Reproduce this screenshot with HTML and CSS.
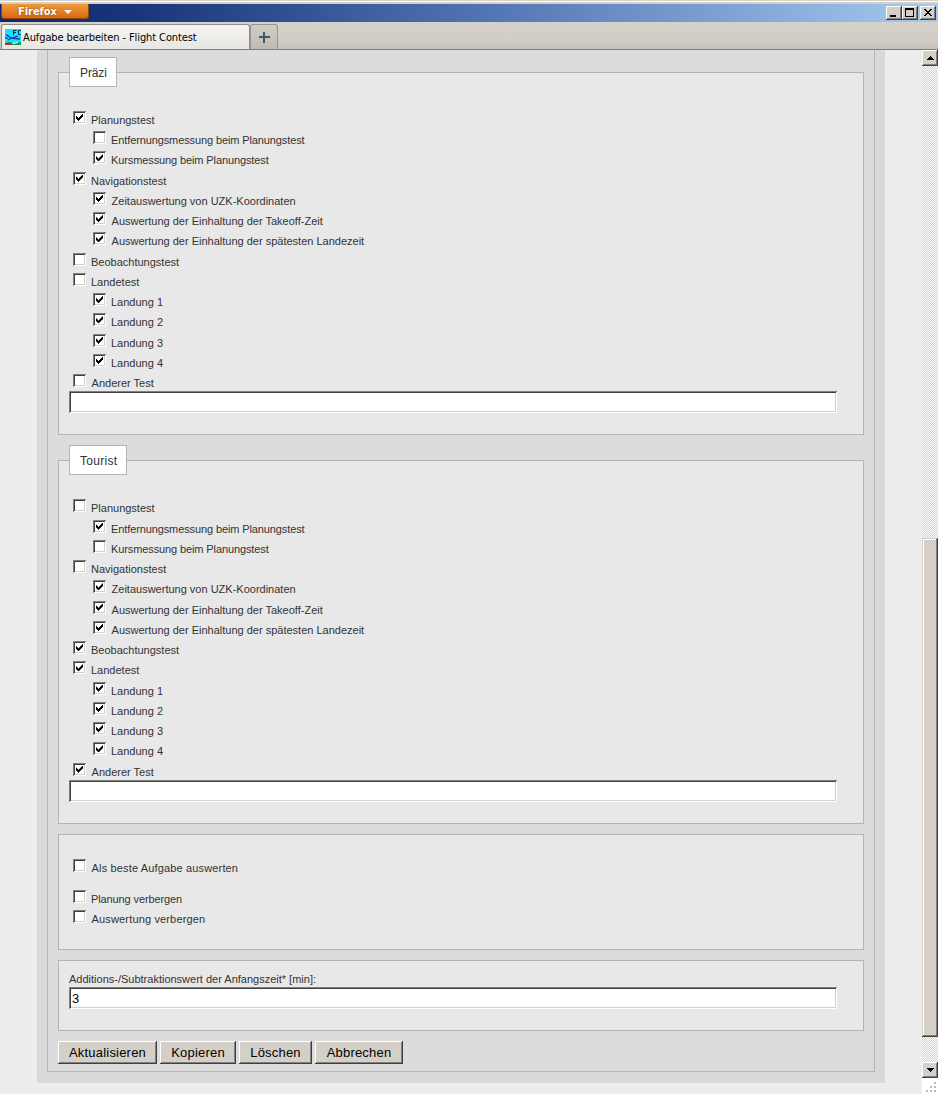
FILE: index.html
```
<!DOCTYPE html>
<html lang="de">
<head>
<meta charset="utf-8">
<title>Aufgabe bearbeiten - Flight Contest</title>
<link rel="stylesheet" href="styles.css">
</head>
<body>
<header class="titlebar">
  <button class="app-menu">Firefox <i class="caret"></i></button>
  <div class="window-buttons">
    <button class="win" aria-label="Minimieren"><svg width="16" height="14" shape-rendering="crispEdges"><path d="M4 9h6v2H4z"/></svg></button>
    <button class="win" aria-label="Maximieren"><svg width="16" height="14" shape-rendering="crispEdges"><path fill-rule="evenodd" d="M3 2h9v9H3zM4 4v6h7V4z"/></svg></button>
    <button class="win close" aria-label="Schließen"><svg width="16" height="14" shape-rendering="crispEdges"><path d="M4 3h2v1h1v1h2V4h1V3h2v1h-1v1h-1v1H9v1h1v1h1v1h1v1h-2V9H9V8H7v1H6v1H4V9h1V8h1V7h1V6H6V5H5V4H4z"/></svg></button>
  </div>
</header>
<nav class="tabs">
  <div class="tab">
    <svg class="favicon" width="16" height="16" viewBox="0 0 16 16"><path fill="#14e4f4" d="M0 0h16v16H0z"/><path fill="#16934f" d="M0 14l4-1 5 1 7-1v3H0z"/><path fill="#b52d2b" d="M0 15l3-1 4 1v1H0z"/><path fill="#e8fbff" d="M7 14l6-1v1l-5 1z"/><path fill="none" stroke="#1535c8" stroke-width="1.3" d="M1 5.5l5 3.5 9 1M3 11l4-2 6-2M0 8.500l3 1"/><path fill="none" stroke="#062c3c" stroke-width="1" d="M8.500 6V1.500h3M8.500 3.500h2.500M15.500 1.500h-2v4h2"/></svg>
    <span class="tab-title">Aufgabe bearbeiten - Flight Contest</span>
  </div>
  <div class="new-tab"><svg width="11" height="11" shape-rendering="crispEdges"><path fill="#46566b" d="M4 0h2v4h5v2H6v5H4V6H0V4h4z"/></svg></div>
</nav>
<div class="viewport">
  <main class="page">
    <div class="panel"><form class="form">
      <section class="group named">
        <h2 class="legend first">Präzi</h2>
        <div class="checks">
          <label class="row"><input type="checkbox" checked>Planungstest</label>
          <label class="row sub tight"><input type="checkbox">Entfernungsmessung beim Planungstest</label>
          <label class="row sub tight"><input type="checkbox" checked>Kursmessung beim Planungstest</label>
          <label class="row"><input type="checkbox" checked>Navigationstest</label>
          <label class="row sub shifted"><input type="checkbox" checked>Zeitauswertung von UZK-Koordinaten</label>
          <label class="row sub shifted"><input type="checkbox" checked>Auswertung der Einhaltung der Takeoff-Zeit</label>
          <label class="row sub shifted"><input type="checkbox" checked>Auswertung der Einhaltung der spätesten Landezeit</label>
          <label class="row"><input type="checkbox">Beobachtungstest</label>
          <label class="row"><input type="checkbox">Landetest</label>
          <label class="row sub"><input type="checkbox" checked>Landung 1</label>
          <label class="row sub"><input type="checkbox" checked>Landung 2</label>
          <label class="row sub"><input type="checkbox" checked>Landung 3</label>
          <label class="row sub"><input type="checkbox" checked>Landung 4</label>
          <label class="row shifted"><input type="checkbox">Anderer Test</label>
        </div>
        <input class="field" type="text">
      </section>
      <section class="group named tourist">
        <h2 class="legend">Tourist</h2>
        <div class="checks">
          <label class="row"><input type="checkbox">Planungstest</label>
          <label class="row sub tight"><input type="checkbox" checked>Entfernungsmessung beim Planungstest</label>
          <label class="row sub tight"><input type="checkbox">Kursmessung beim Planungstest</label>
          <label class="row"><input type="checkbox">Navigationstest</label>
          <label class="row sub shifted"><input type="checkbox" checked>Zeitauswertung von UZK-Koordinaten</label>
          <label class="row sub shifted"><input type="checkbox" checked>Auswertung der Einhaltung der Takeoff-Zeit</label>
          <label class="row sub shifted"><input type="checkbox" checked>Auswertung der Einhaltung der spätesten Landezeit</label>
          <label class="row"><input type="checkbox" checked>Beobachtungstest</label>
          <label class="row"><input type="checkbox" checked>Landetest</label>
          <label class="row sub"><input type="checkbox" checked>Landung 1</label>
          <label class="row sub"><input type="checkbox" checked>Landung 2</label>
          <label class="row sub"><input type="checkbox" checked>Landung 3</label>
          <label class="row sub"><input type="checkbox" checked>Landung 4</label>
          <label class="row shifted"><input type="checkbox" checked>Anderer Test</label>
        </div>
        <input class="field" type="text">
      </section>
      <section class="group options">
        <label class="row spaced shifted loose"><input type="checkbox">Als beste Aufgabe auswerten</label>
        <label class="row tight"><input type="checkbox">Planung verbergen</label>
        <label class="row shifted loose"><input type="checkbox">Auswertung verbergen</label>
      </section>
      <section class="group offset">
        <label class="caption" for="start">Additions-/Subtraktionswert der Anfangszeit* [min]:</label>
        <input class="field" id="start" type="text" value="3">
      </section>
      <div class="actions">
        <button type="button" class="btn update">Aktualisieren</button>
        <button type="button" class="btn copy">Kopieren</button>
        <button type="button" class="btn delete">Löschen</button>
        <button type="button" class="btn cancel">Abbrechen</button>
      </div>
    </form></div>
  </main>
  <aside class="scrollbar">
    <div class="arrow"><svg width="7" height="4" shape-rendering="crispEdges"><path d="M3 0h1v1h1v1h1v1h1v1H0V3h1V2h1V1h1z"/></svg></div>
    <div class="track"><div class="thumb"></div></div>
    <div class="arrow"><svg width="7" height="4" shape-rendering="crispEdges"><path d="M0 0h7v1H6v1H5v1H4v1H3V3H2V2H1V1H0z"/></svg></div>
    <svg class="grip" width="16" height="16" shape-rendering="crispEdges"><path fill="#b8b8b8" d="M12 4h2v2h-2zM8 8h2v2H8zM12 8h2v2h-2zM4 12h2v2H4zM8 12h2v2H8zM12 12h2v2h-2z"/></svg>
  </aside>
</div>
</body>
</html>
```
FILE: styles.css
```
* { box-sizing: border-box; }
body {
  margin: 0;
  height: 1094px;
  overflow: hidden;
  display: flex;
  flex-direction: column;
  font-family: "Liberation Sans", Arial, sans-serif;
  font-size: 11px;
  color: #333;
}
button { font-family: inherit; padding: 0; margin: 0; }

/* Window frame */
.titlebar {
  height: 22px;
  flex: none;
  display: flex;
  justify-content: space-between;
  align-items: flex-start;
  padding: 4px 2px 0 1px;
  background:
    linear-gradient(#d4d0c8 0 1px, #fff 1px 2px, #d4d0c8 2px 4px, transparent 4px),
    linear-gradient(90deg, #0f2a70, #18347a 14%, #5275b4 52%, #a6caf0);
}
.app-menu {
  width: 88px;
  height: 15px;
  display: flex;
  align-items: center;
  justify-content: center;
  gap: 7px;
  border: 1px solid #8e4a10;
  border-top: 0;
  border-radius: 0 0 3px 3px;
  background: linear-gradient(#eb9a3c, #e68325 50%, #d9670f);
  color: #fff;
  font: bold 11px/14px "DejaVu Sans Condensed", "DejaVu Sans", sans-serif;
  padding-top: 2px;
  letter-spacing: -0.05px;
  text-shadow: 0 0 2px #7a3a00;
}
.caret { border: 4px solid transparent; border-top: 4px solid #fff; border-bottom: 0; }
.window-buttons { display: flex; padding-top: 2px; }
.win {
  width: 16px;
  height: 14px;
  border: 0;
  background: #d4d0c8;
  box-shadow: inset -1px -1px #404040, inset 1px 1px #fff, inset -2px -2px #808080;
}
.win svg { display: block; }
.close { margin-left: 2px; }
.tabs {
  height: 28px;
  flex: none;
  display: flex;
  align-items: flex-end;
  padding-left: 1px;
  background: linear-gradient(#d6d2cb, #d0ccc4 70%, #c6c2ba);
  border-bottom: 1px solid #7f7e79;
}
.tab {
  width: 249px;
  height: 25px;
  display: flex;
  align-items: center;
  gap: 2px;
  padding-left: 3px;
  border: 1px solid #908d86;
  border-bottom: 0;
  border-radius: 3px 3px 0 0;
  background: linear-gradient(#f6f5f3, #e8e6e2);
  color: #000;
}
.favicon { flex: none; }
.tab-title { padding-top: 2px; font: 11px/16px "DejaVu Sans Condensed", "DejaVu Sans", sans-serif; letter-spacing: -0.1px; white-space: nowrap; }
.new-tab {
  width: 28px;
  height: 25px;
  display: flex;
  align-items: center;
  justify-content: center;
  border: 1px solid #98958e;
  border-bottom: 0;
  border-radius: 3px 3px 0 0;
  background: linear-gradient(#d0cdc6, #bfbbb3);
}

/* Page */
.viewport { flex: 1; display: flex; min-height: 0; background: #ededed; }
.page { flex: 1; padding-left: 37px; }
.panel { width: 848px; height: 1033px; padding: 0 10px 11px; background: #d9d9d9; }
.form {
  height: 1022px;
  padding: 22px 10px 0;
  border: 1px solid #b4b4b4;
  border-top: 0;
  background: #dcdcdc;
}
.group { width: 806px; border: 1px solid #b4b4b4; background: #e8e8e8; padding-left: 10px; margin-bottom: 10px; }
.named { height: 363px; margin-bottom: 25px; }
.tourist { height: 364px; margin-bottom: 10px; }
.legend {
  width: max-content;
  height: 30px;
  margin: -16px 0 23.9px;
  padding: 0 10px;
  border: 1px solid #b4b4b4;
  background: #fff;
  font-size: 12px;
  font-weight: normal;
  line-height: 30px;
  letter-spacing: 0.15px;
}
.first { width: 48px; letter-spacing: -0.1px; }
.tourist .legend { width: 58px; letter-spacing: 0.3px; margin-bottom: 24.4px; }
.checks { height: 280.1px; padding-left: 4px; }
.tourist .checks { height: 280.6px; }
.row { display: flex; gap: 5px; height: 20.25px; line-height: 18px; white-space: nowrap; }
.sub { padding-left: 20px; }
.tight { letter-spacing: -0.11px; }
.loose { letter-spacing: 0.15px; }
.shifted { gap: 5.6px; }
.row input {
  appearance: none;
  flex: none;
  width: 13px;
  height: 13px;
  margin: 0;
  background: #fff;
  box-shadow: inset 1px 1px #808080, inset -1px -1px #fff, inset 2px 2px #404040, inset -2px -2px #d4d0c8;
}
.row input:checked::before {
  content: "";
  display: block;
  width: 7px;
  height: 7px;
  margin: 3px;
  background: #000;
  clip-path: polygon(0 2px, 1px 2px, 1px 3px, 2px 3px, 2px 4px, 3px 4px, 3px 3px, 4px 3px, 4px 2px, 5px 2px, 5px 1px, 6px 1px, 6px 0, 7px 0, 7px 3px, 6px 3px, 6px 4px, 5px 4px, 5px 5px, 4px 5px, 4px 6px, 3px 6px, 3px 7px, 2px 7px, 2px 6px, 1px 6px, 1px 5px, 0 5px);
}
.field {
  display: block;
  width: 768px;
  height: 22px;
  margin: 0;
  padding: 1px 3px 0;
  border: 0;
  background: #fff;
  box-shadow: inset 1px 1px #808080, inset -1px -1px #fff, inset 2px 2px #404040, inset -2px -2px #d4d0c8;
  font: 13px "Liberation Sans", Arial, sans-serif;
  color: #000;
}
.options { height: 116px; padding: 24px 0 0 14px; }
.spaced { height: 31px; }
.offset { height: 71px; padding-top: 10px; }
.caption { display: block; height: 16px; line-height: 17px; }
.actions { display: flex; gap: 3px; }
.btn {
  height: 23px;
  border: 0;
  background: #d4d0c8;
  box-shadow: inset -1px -1px #404040, inset 1px 1px #fff, inset -2px -2px #808080;
  color: #000;
  font-size: 13px;
  letter-spacing: 0.2px;
}
.update { width: 99px; }
.copy { width: 76px; }
.delete { width: 73px; }
.cancel { width: 88px; }

/* Scrollbar */
.scrollbar { width: 16px; display: flex; flex-direction: column; background: #fff; }
.arrow {
  height: 16px;
  flex: none;
  display: flex;
  align-items: center;
  justify-content: center;
  background: #d4d0c8;
  box-shadow: inset -1px -1px #404040, inset 1px 1px #fff, inset -2px -2px #808080;
}
.track { flex: 1; padding-top: 472px; background: repeating-conic-gradient(#d4d0c8 0 25%, #fff 0 50%) 0 0 / 2px 2px; }
.thumb {
  height: 499px;
  background: #d4d0c8;
  box-shadow: inset -1px -1px #404040, inset 1px 1px #d4d0c8, inset -2px -2px #808080, inset 2px 2px #fff;
}
.grip { flex: none; display: block; }
```
